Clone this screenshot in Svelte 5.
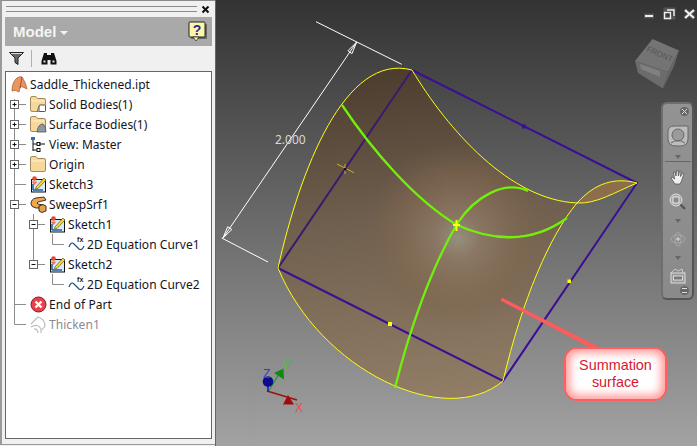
<script>
	// browser tree rows: d = depth, exp = expander, last = last child of its parent
	const rows = [
		{ d: 0, icon: 'part', label: 'Saddle_Thickened.ipt', open: [] },
		{ d: 1, exp: '+', icon: 'solid', label: 'Solid Bodies(1)', open: [], first: true },
		{ d: 1, exp: '+', icon: 'surface', label: 'Surface Bodies(1)', open: [] },
		{ d: 1, exp: '+', icon: 'view', label: 'View: Master', open: [] },
		{ d: 1, exp: '+', icon: 'folder', label: 'Origin', open: [] },
		{ d: 1, icon: 'sketch', label: 'Sketch3', open: [] },
		{ d: 1, exp: '-', icon: 'sweep', label: 'SweepSrf1', open: [] },
		{ d: 2, exp: '-', icon: 'sketch', label: 'Sketch1', open: [1] },
		{ d: 3, icon: 'curve', label: '2D Equation Curve1', open: [1, 2], last: true },
		{ d: 2, exp: '-', icon: 'sketch', label: 'Sketch2', open: [1], last: true },
		{ d: 3, icon: 'curve', label: '2D Equation Curve2', open: [1], last: true },
		{ d: 1, icon: 'end', label: 'End of Part', open: [] },
		{ d: 1, icon: 'thicken', label: 'Thicken1', open: [], last: true, off: true }
	];

	const colX = (d) => 8.5 + 19 * (d - 1);

	// surface outline, in page coordinates
	const leftEdge = 'M278 268 C300 170 345 52 412 70';
	const mainFill =
		leftEdge + ' C448 130 510 200 577 203 C550 235 522 300 503 381 C445 430 320 370 278 268 Z';
	const lensFill = 'M577 203 C597 204 615 192 637 183 C615 177 595 183 577 203 Z';
	const yellow = mainFill + ' ' + lensFill;
	const green1 = 'M342 105 C372 150 415 200 457 225 C490 240 530 245 567 218';
	const green2 = 'M395 388 C408 335 430 270 457 224 C475 196 505 180 528 191';
</script>

{#snippet sketchIcon()}
	<rect x="1.5" y="3.5" width="14" height="12.5" fill="#dbe9f7" stroke="#111" />
	<path d="M3 14 L13 14 M3 14 L3 8" stroke="#1d5fa8" stroke-width="1.5" fill="none" />
	<path d="M6 11 L14 2 L16 4 L8 12.5 L5.5 13 Z" fill="#f5d33a" stroke="#6b5a12" stroke-width=".7" />
	<circle cx="4.5" cy="2.5" r="2.3" fill="#e8482c" />
	<path d="M1.5 5.5 H7.5 L4.5 9 Z" fill="#e8784c" />
{/snippet}

{#snippet folderShape()}
	<path d="M.5 4 V2 Q.5 .5 2 .5 H6 L7.5 2.5 H14 Q15.5 2.5 15.5 4 V14 Q15.5 15.5 14 15.5 H2 Q.5 15.5 .5 14 Z" fill="#f6d89a" stroke="#a58a5c" />
	<path d="M1.5 5 H14.5" stroke="#fff2cf" />
{/snippet}

{#snippet treeIcon(kind)}
	<svg class="ico" width="17" height="17" viewBox="0 0 17 17">
		{#if kind === 'part'}
			<path d="M1 15 Q1 6 6 2 Q9 0 11 1 Q15 7 16 13 L12 11 Q10 10 9 12 L8 16 Q4 13 1 15 Z" fill="#ec9460" stroke="#a66236" stroke-width=".8" />
			<path d="M9 12 Q10 7 11 1" stroke="#7c4a2a" fill="none" stroke-width=".8" />
		{:else if kind === 'solid'}
			{@render folderShape()}
			<rect x="9" y="9" width="6.5" height="6.5" rx="1" fill="#fff" stroke="#555" />
			<path d="M7 16 L9 10" stroke="#777" />
		{:else if kind === 'surface'}
			{@render folderShape()}
			<path d="M7 16 Q8 8 13 8 Q16 10 16 16 Z" fill="#8c98a4" stroke="#555" stroke-width=".8" />
		{:else if kind === 'folder'}
			{@render folderShape()}
		{:else if kind === 'view'}
			<path d="M1 1 H5 V4 H1 Z" fill="#2a6fc0" />
			<path d="M3 4 V15 M3 8 H7 M3 14 H7 M9 8 H15" stroke="#111" fill="none" />
			<rect x="7" y="6.5" width="3" height="3" fill="none" stroke="#111" />
			<rect x="7" y="12.5" width="3" height="3" fill="none" stroke="#111" />
		{:else if kind === 'sketch'}
			{@render sketchIcon()}
		{:else if kind === 'sweep'}
			<path d="M1 8 Q1 3 6 2 L14 1 L16 4 L8 6 Q6 7 8 8 L13 9 L13 12 L6 12 Q1 11 1 8 Z" fill="#f0a84c" stroke="#222" stroke-width=".9" />
			<path d="M9 10 L13 8.5 L16 10 V15 L12 16.5 L9 15 Z" fill="#e8a04a" stroke="#222" stroke-width=".9" />
		{:else if kind === 'curve'}
			<path d="M1 11 Q3 5 6 8 T11 13 Q14 15 16 10" fill="none" stroke="#234a7a" stroke-width="1.2" />
			<text x="9" y="6" class="fx">fx</text>
		{:else if kind === 'end'}
			<circle cx="8.5" cy="8.5" r="7.5" fill="#e8414a" stroke="#8c1a20" />
			<path d="M5.5 5.5 L11.5 11.5 M11.5 5.5 L5.5 11.5" stroke="#fff" stroke-width="2.4" />
		{:else if kind === 'thicken'}
			<g fill="none" stroke="#bdbdbd" stroke-width="1.2">
				<path d="M1 8 Q5 4 8 1 Q15 3 15 10 L12 14" />
				<path d="M1 11 Q8 7 11 13 V17" />
				<path d="M4 13 Q7 12 8 17" />
			</g>
		{/if}
	</svg>
{/snippet}

<div class="app">
	<aside class="panel">
		<div class="grip">
			<div class="grip-lines"></div>
			<svg width="9" height="9" viewBox="0 0 9 9"><path d="M1.5 1.5 L7.5 7.5 M7.5 1.5 L1.5 7.5" stroke="#111" stroke-width="2" /></svg>
		</div>
		<div class="head">
			<span class="model">Model</span>
			<span class="caret"></span>
			<svg class="help" width="20" height="21" viewBox="0 0 20 21">
				<rect x="3" y="3" width="16" height="15" rx="1" fill="#666" />
				<rect x="1" y="1" width="16" height="15" rx="1" fill="#fdf6a8" stroke="#222" />
				<path d="M5 16 L11 16 L8 20 Z" fill="#fdf6a8" stroke="#222" stroke-width=".7" />
				<text x="9" y="13.5" class="q">?</text>
			</svg>
		</div>
		<div class="tools">
			<svg width="15" height="13" viewBox="0 0 15 13"><path d="M.5 .5 H14.5 L9 6 V12.5 L6 10.5 V6 Z" fill="#666" stroke="#222" /><path d="M2 1.5 H13" stroke="#ddd" /></svg>
			<span class="sep"></span>
			<svg width="16" height="13" viewBox="0 0 16 13">
				<path d="M3 1 H6 V3 H10 V1 H13 L15.5 9 V12.5 H9.5 V8 H6.5 V12.5 H.5 V9 Z" fill="#111" />
				<rect x="2.5" y="8.5" width="2" height="2" fill="#ddd" /><rect x="11.5" y="8.5" width="2" height="2" fill="#ddd" />
			</svg>
		</div>
		<div class="tree">
			{#each rows as r}
				<div class="row" class:off={r.off} class:root={r.d === 0}>
					{#if r.d > 0}
						<svg class="guides" width={20 + 19 * (r.d - 1)} height="20">
							{#each r.open as o}
								<path d="M{colX(o)} 0 V20" />
							{/each}
							<path d="M{colX(r.d)} {r.first ? 5 : 0} V{r.last ? 10.5 : 20}" />
							<path d="M{colX(r.d)} 10.5 H{20 + 19 * (r.d - 1)}" />
							{#if r.exp}
								<rect class="box" x={colX(r.d) - 4} y="6.5" width="8" height="8" />
								<path class="mark" d="M{colX(r.d) - 2} 10.5 H{colX(r.d) + 2}{r.exp === '+' ? ` M${colX(r.d)} 8.5 V12.5` : ''}" />
							{/if}
						</svg>
					{/if}
					{@render treeIcon(r.icon)}
					<span class="label">{r.label}</span>
				</div>
			{/each}
		</div>
	</aside>

	<main class="view">
		<svg class="scene" width="482" height="446" viewBox="215 0 482 446">
			<defs>
				<linearGradient id="base" gradientUnits="userSpaceOnUse" x1="400" y1="70" x2="430" y2="395">
					<stop offset="0" stop-color="#4c3d2f" />
					<stop offset=".45" stop-color="#6f5f4e" />
					<stop offset="1" stop-color="#917d66" />
				</linearGradient>
				<radialGradient id="glow" gradientUnits="userSpaceOnUse" cx="458" cy="238" r="95">
					<stop offset="0" stop-color="#95907f" stop-opacity="1" />
					<stop offset=".22" stop-color="#8d7a66" stop-opacity=".9" />
					<stop offset=".7" stop-color="#80674e" stop-opacity=".5" />
					<stop offset="1" stop-color="#7a6450" stop-opacity="0" />
				</radialGradient>
			</defs>

			<path d={mainFill} fill="url(#base)" />
			<path d={mainFill} fill="url(#glow)" />
			<path d={lensFill} fill="#8c6e4a" />

			<path d="M412 70 L637 183 L503 381 L278 268" fill="none" stroke="#3b0f94" stroke-width="2" />
			<path d="M412 70 L278 268" fill="none" stroke="#3a1a6e" stroke-width="2" />
			<path d={yellow} fill="none" stroke="#ffff10" stroke-width="1" />
			<g fill="none" stroke="#72f00c" stroke-width="2.3">
				<path d={green1} />
				<path d={green2} />
			</g>

			<!-- midpoints -->
			<rect x="522" y="124.5" width="4" height="4" fill="#3b0f94" />
			<rect x="388" y="322" width="4" height="4" fill="#ffff10" />
			<rect x="567.5" y="279.5" width="3.5" height="3.5" fill="#ffff10" />
			<path d="M453 225 H460 M456.5 220 V231" stroke="#ffff10" stroke-width="2" />
			<path d="M337 164 L354 172.7 M345 164 V174" stroke="#d0b020" stroke-width="1" />
			<rect x="344" y="168" width="2.5" height="2.5" fill="#1a0a40" />

			<!-- dimension -->
			<g fill="none" stroke="#fff" stroke-width="1">
				<path d="M316 21.7 L401.7 64.3 M221.7 238 L268 262 M356.7 42 L223 238" />
				<path d="M356.7 42 L352 53.6 L347.9 50.8 Z" />
				<path d="M223 238 L231.8 229.5 L227.7 226.7 Z" />
			</g>
			<text x="275" y="144" class="dim">2.000</text>

			<!-- triad -->
			<path d="M268 392 L298 401" stroke="#a01010" stroke-width="1.5" transform="translate(-1 -1)" />
			<path d="M268 392 L279 374" stroke="#12a020" stroke-width="1.2" />
			<path d="M268 392 V382" stroke="#1414c0" stroke-width="1.5" />
			<path d="M283 404.5 L288 395 L294 404.5 Z" fill="#a00c0c" />
			<path d="M274 373 L283.5 368.5 L284 379.5 Z" fill="#0e8a14" />
			<circle cx="268" cy="381.5" r="5.3" fill="#0c0c90" />
			<text x="263" y="378" class="axis" fill="#3a3ac8">Z</text>
			<text x="283" y="369" class="axis" fill="#33c83a">Y</text>
			<text x="295" y="412" class="axis" fill="#ee4a4a">X</text>

			<!-- view cube -->
			<path d="M652.5 39 L679 50.6 L668 72 L635 61 Z" fill="#747474" />
			<path d="M635 61 L668 72 L663 88.5 L638 73 Z" fill="#6c6c6c" />
			<path d="M679 50.6 L668 72 L663 88.5 L674 66 Z" fill="#666" />
			<text class="cube" transform="translate(646 51) rotate(24)">FRONT</text>
			<path d="M640 64 L660 71 L660 77 L641 69 Z" fill="#808080" />

			<!-- window buttons -->
			<g fill="none">
				<path d="M644 16 H654" stroke="#555" stroke-width="5" />
				<path d="M645 16 H653" stroke="#eee" stroke-width="2" />
				<rect x="665" y="9" width="9" height="9" stroke="#555" stroke-width="3" />
				<path d="M667 10 H674 V16 M664.5 12.5 H670.5 V18.5 H664.5 Z" stroke="#eee" stroke-width="1.4" />
				<path d="M685 10 L694 18 M694 10 L685 18" stroke="#555" stroke-width="4" />
				<path d="M685 10 L694 18 M694 10 L685 18" stroke="#f2f2f2" stroke-width="2" />
			</g>

			<!-- callout pointer -->
			<path d="M500.5 300.5 L502 297.8 L600 347.5 L590 347.5 Z" fill="#fb5c5c" />
		</svg>

		<div class="nav">
			<span class="dot top"><svg width="7" height="7" viewBox="0 0 7 7"><path d="M1 1 L6 6 M6 1 L1 6" stroke="#ddd" /></svg></span>
			<svg class="wheel" width="22" height="22" viewBox="0 0 22 22">
				<path d="M1 7 Q1 1 7 1 H20 Q21 1 21 2 V14 Q21 21 13 21 H9 Q1 21 1 14 Z" fill="#bdbdbd" stroke="#666" />
				<circle cx="11" cy="10" r="6" fill="#9b9b9b" stroke="#666" />
				<path d="M4 18 Q11 13 18 18" fill="none" stroke="#666" />
			</svg>
			<span class="tri first"></span>
			<span class="rule"></span>
			<svg width="16" height="16" viewBox="0 0 16 16">
				<path d="M5 15 L1 9 L2 8 L4.5 10 L3.5 3 L5 3 L6 7 L6.5 1.5 L8 1.5 L8.5 7 L9.5 2 L11 2 L10.5 7.5 L12.5 4 L14 4.5 L11.5 12 L10 15 Z" fill="#f0f0f0" stroke="#555" stroke-width=".8" />
			</svg>
			<svg class="gap" width="17" height="17" viewBox="0 0 17 17">
				<path d="M11 11 L16 16" stroke="#555" stroke-width="2.4" />
				<circle cx="7" cy="7" r="6" fill="#a8a8a8" stroke="#ddd" />
				<rect x="4" y="4" width="6" height="6" fill="#8a8a8a" stroke="#e8e8e8" />
			</svg>
			<span class="tri"></span>
			<svg class="gap" width="16" height="16" viewBox="0 0 16 16" fill="none" stroke="#a8a8a8">
				<ellipse cx="8" cy="8" rx="7" ry="4" />
				<ellipse cx="8" cy="8" rx="3" ry="7" />
				<path d="M6 8 H10 M8 6 V10" stroke="#ddd" />
			</svg>
			<span class="tri"></span>
			<svg class="gap" width="16" height="16" viewBox="0 0 16 16">
				<path d="M1 5 L5 1 L8 3 L12 1 L13 5" fill="none" stroke="#ccc" />
				<rect x="1" y="5" width="14" height="10" fill="#999" stroke="#ddd" />
				<rect x="3.5" y="8" width="9" height="4" fill="#777" stroke="#ddd" />
			</svg>
			<span class="dot bottom"><span class="bars"></span></span>
		</div>

		<div class="callout"><span>Summation<br />surface</span></div>
	</main>
</div>

<style>
	:global(body) {
		margin: 0;
		background: #f0f0f0;
	}

	.app {
		display: flex;
		width: 697px;
		height: 446px;
		overflow: hidden;
		font-family: 'Noto Sans', 'Liberation Sans', sans-serif;
	}

	.panel {
		box-sizing: border-box;
		width: 215px;
		height: 445px;
		padding: 1px 3px 0 3px;
		background: #f0f0f0;
		border-top: 1px solid #8a8a8a;
		border-left: 2px solid #9a9a9a;
		border-bottom: 1px solid #9a9a9a;
		display: flex;
		flex-direction: column;
	}

	.grip {
		display: flex;
		align-items: center;
		justify-content: space-between;
		height: 14px;
		padding: 0 2px 0 1px;
	}

	.grip-lines {
		width: 191px;
		height: 4px;
		border-top: 1px solid #8c8c8c;
		border-bottom: 1px solid #8c8c8c;
	}

	.head {
		display: flex;
		align-items: center;
		height: 29px;
		margin-top: 1px;
		padding: 0 4px 0 8px;
		background: #a9a9a9;
		color: #fff;
	}

	.model {
		font: 700 15px 'Liberation Sans', sans-serif;
		color: #f4f4f4;
	}

	.caret {
		margin: 2px 0 0 4px;
		border-left: 4px solid transparent;
		border-right: 4px solid transparent;
		border-top: 4px solid #f4f4f4;
	}

	.help {
		margin-left: auto;
	}

	.q {
		font: 700 14px 'Liberation Sans', sans-serif;
		fill: #2a2aa0;
		text-anchor: middle;
	}

	.tools {
		display: flex;
		align-items: center;
		gap: 7px;
		height: 25px;
		padding-left: 4px;
	}

	.sep {
		width: 1px;
		height: 17px;
		background: #b0b0b0;
		margin-right: 2px;
	}

	.tree {
		box-sizing: border-box;
		width: 207px;
		height: 368px;
		padding-top: 2px;
		background: #fff;
		border: 1px solid #666;
		overflow: hidden;
	}

	.row {
		display: flex;
		align-items: center;
		height: 20px;
		color: #14141e;
		font-size: 12px;
		letter-spacing: 0.05px;
		white-space: nowrap;
	}

	.row.root {
		padding-left: 5px;
	}

	.row.off .label {
		color: #8a8a96;
	}

	.guides {
		flex: none;
	}

	.guides path {
		fill: none;
		stroke: #8c8c8c;
		stroke-width: 1;
	}

	.guides .box {
		fill: #fff;
		stroke: #666;
	}

	.guides .mark {
		stroke: #111;
	}

	.ico {
		flex: none;
		margin-left: 4px;
	}

	.root .ico {
		margin-left: 0;
	}

	.label {
		margin-left: 2px;
	}

	.fx {
		font: 700 7px 'Liberation Sans', sans-serif;
		fill: #222;
	}

	.view {
		position: relative;
		flex: 1;
		height: 446px;
		background: linear-gradient(#333, #a2a2a2);
		border-left: 1px solid #666;
		box-sizing: border-box;
	}

	.scene {
		position: absolute;
		left: -1px;
		top: 0;
		display: block;
	}

	.dim {
		font: 12px 'Noto Sans', sans-serif;
		fill: #d8d8d8;
	}

	.axis {
		font: 12px 'Liberation Sans', sans-serif;
	}

	.cube {
		font: 8px 'Liberation Sans', sans-serif;
		fill: #555;
	}

	.nav {
		position: absolute;
		left: 445px;
		top: 102px;
		box-sizing: border-box;
		width: 33px;
		height: 198px;
		padding-top: 21px;
		display: flex;
		flex-direction: column;
		align-items: center;
		background: linear-gradient(#939393, #8a8a8a);
		border: 2px solid #555;
		border-top-color: #6e6e6e;
		border-left-color: #6e6e6e;
		border-radius: 6px;
	}

	.tri {
		margin-top: 9px;
		border-left: 3.5px solid transparent;
		border-right: 3.5px solid transparent;
		border-top: 4px solid #666;
	}

	.tri.first {
		margin-top: 8px;
	}

	.rule {
		width: 26px;
		height: 1px;
		margin: 2px 0 7px;
		background: #666;
	}

	.gap {
		margin-top: 8px;
	}

	.dot {
		position: absolute;
		right: 3px;
		width: 9px;
		height: 9px;
		display: flex;
		align-items: center;
		justify-content: center;
		background: #666;
		border-radius: 50%;
	}

	.dot.top {
		top: 3px;
	}

	.dot.bottom {
		bottom: 3px;
	}

	.bars {
		width: 5px;
		height: 3px;
		border-top: 1px solid #ddd;
		border-bottom: 1px solid #ddd;
	}

	.callout {
		position: absolute;
		left: 348px;
		top: 347px;
		box-sizing: border-box;
		width: 103px;
		height: 54px;
		display: flex;
		align-items: center;
		justify-content: center;
		text-align: center;
		font: 14.4px/17px 'Liberation Sans', sans-serif;
		color: #d81830;
		background: #fff;
		border: 2px solid #ff5f5f;
		border-radius: 13px;
		box-shadow: inset 0 0 9px 4px #ff9a9a;
	}
</style>
